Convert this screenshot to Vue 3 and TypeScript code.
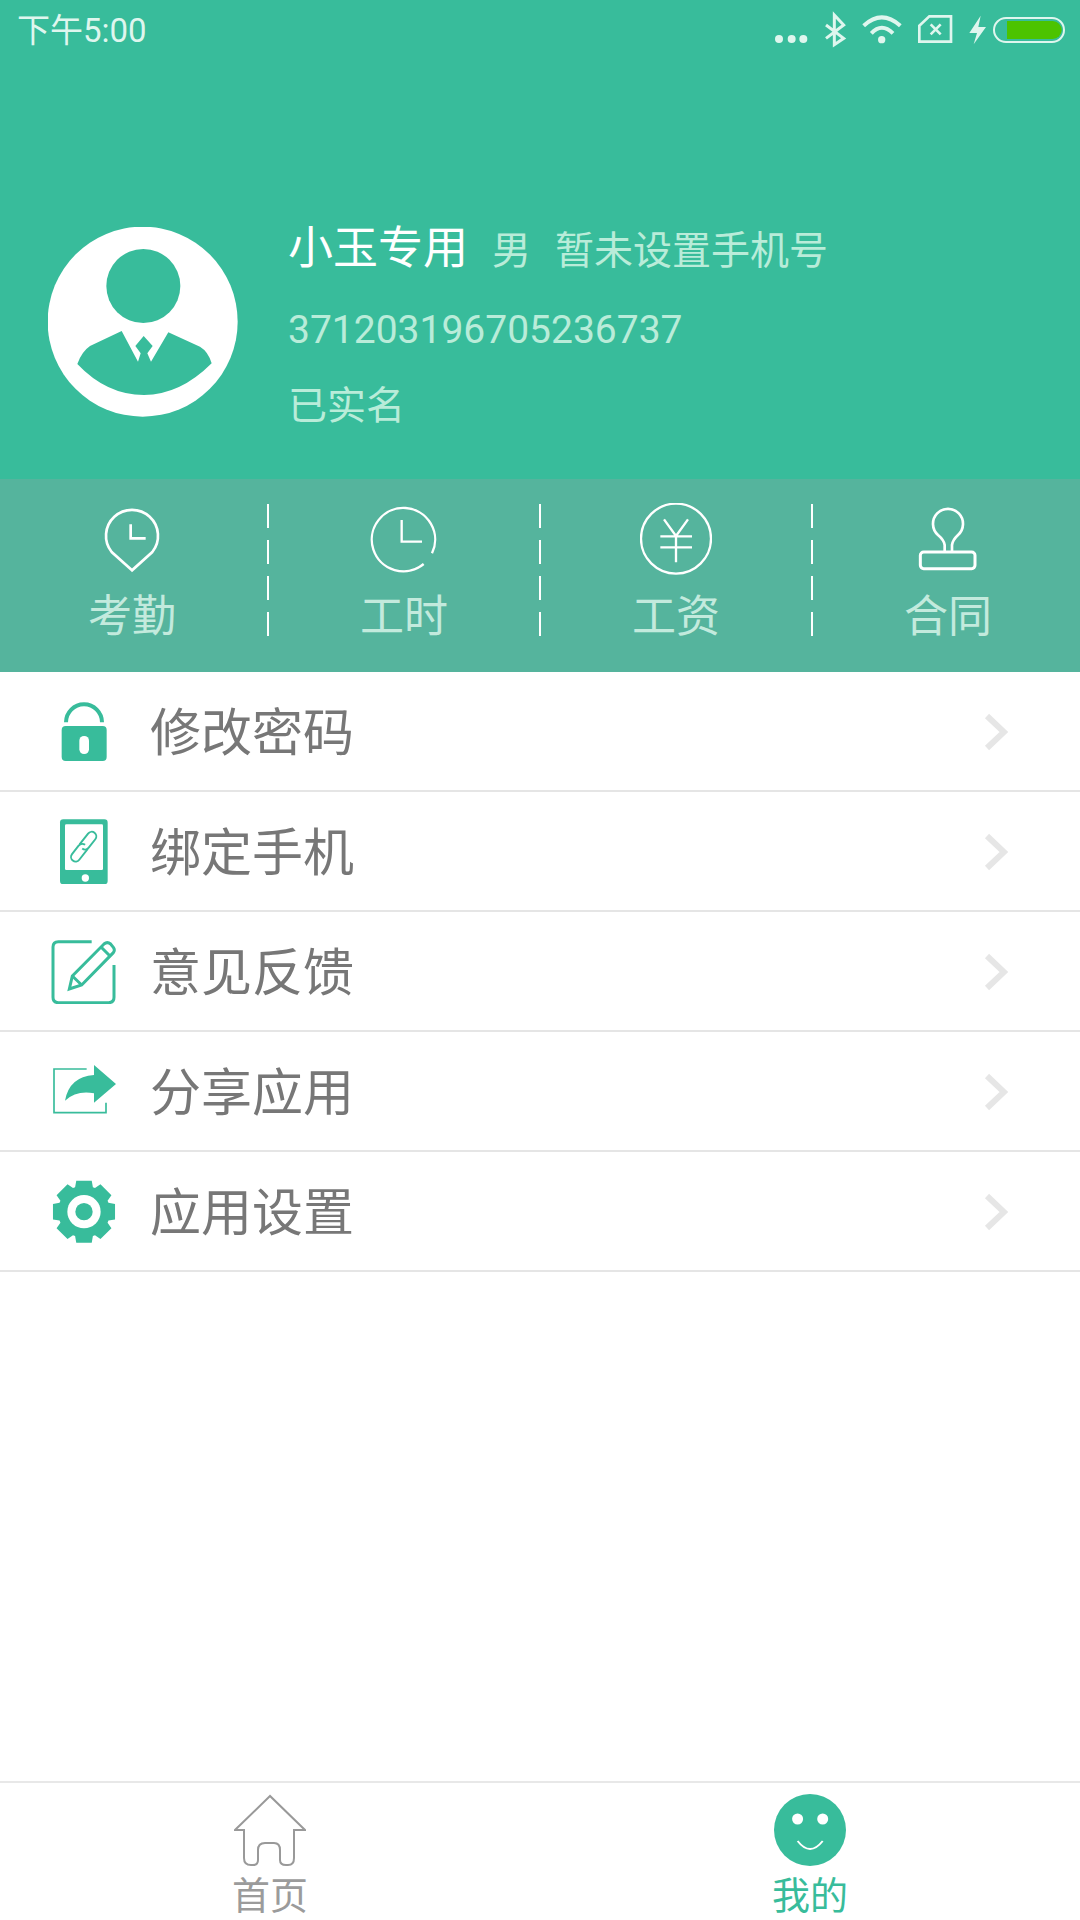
<template>
  <div class="page">
    <header class="header">
      <div class="status">
        <span class="time">下午5:00</span>
        <svg class="status-icons" viewBox="0 0 930 150">
          <g fill="#dff6ee">
            <circle cx="42" cy="102" r="12" />
            <circle cx="80" cy="102" r="12" />
            <circle cx="115" cy="102" r="12" />
            <circle cx="350" cy="104" r="11" />
            <polygon points="647,32 613,84 636,84 626,118 663,66 640,66" />
          </g>
          <g fill="none" stroke="#dff6ee">
            <path d="M183 60 L236 100 L208 119 V30 L236 60 L183 100" stroke-width="9" />
            <path d="M296 62 Q350 12 406 62" stroke-width="12" />
            <path d="M319 85 Q350 52 384 85" stroke-width="12" />
            <path d="M463 62 L493 34 H558 V110 H463 Z" stroke-width="8" />
            <path d="M497 58 L527 88 M527 58 L497 88" stroke-width="8" />
            <rect x="687" y="39" width="210" height="72" rx="36" stroke-width="6" />
          </g>
          <path d="M726 48 H863 A27 27 0 0 1 863 102 H726 Z" fill="#4cc300" />
        </svg>
      </div>
      <div class="profile">
        <svg class="avatar" viewBox="24 21 570 570">
          <circle cx="308" cy="305" r="285" fill="#fff" />
          <circle cx="310" cy="198" r="111" fill="#38bc9b" />
          <path
            d="M112 432 Q125 395 150 378 L245 333 L294 425 L302 400 L286 378 L311 348 L338 378 L322 400 L333 425 L385 337 L480 380 Q505 395 515 430 Q420 525 312 525 Q200 525 112 432 Z"
            fill="#38bc9b"
          />
        </svg>
        <div class="info">
          <div class="info-line first">
            <span class="name">小玉专用</span>
            <span class="gender">男</span>
            <span class="phone">暂未设置手机号</span>
          </div>
          <div class="info-line idcard">371203196705236737</div>
          <div class="info-line verified">已实名</div>
        </div>
      </div>
    </header>

    <div class="band">
      <div class="band-inner">
        <div v-for="cell in cells" :key="cell.key" class="cell">
          <svg v-if="cell.key === 'pin'" class="cell-icon" viewBox="49 39 216 216" fill="none" stroke="#fff">
            <path d="M157 241 L96 186 A78 78 0 1 1 218 186 Z" stroke-width="8" />
            <path d="M153 103 V145 H198" stroke-width="8" />
          </svg>
          <svg v-else-if="cell.key === 'clock'" class="cell-icon" viewBox="864 39 216 216" fill="none" stroke="#fff">
            <path d="M1056 190 A95 95 0 1 0 1031 222" stroke-width="7" />
            <path d="M965 90 V155 H1026" stroke-width="7" />
          </svg>
          <svg v-else-if="cell.key === 'yen'" class="cell-icon" viewBox="60 39 216 216" fill="none" stroke="#fff">
            <circle cx="168" cy="146" r="105" stroke-width="7" />
            <path d="M132 88 L168 138 L204 88 M168 138 V217 M121 139 H216 M121 172 H216" stroke-width="7" />
          </svg>
          <svg v-else class="cell-icon" viewBox="877 39 216 216" fill="none" stroke="#fff">
            <path d="M975 184 V165 Q973 150 955 135 A45 45 0 1 1 1015 135 Q999 150 997 165 V184" stroke-width="8" />
            <rect x="902" y="186" width="164" height="50" rx="10" stroke-width="9" />
          </svg>
          <span class="cell-label">{{ cell.label }}</span>
        </div>
      </div>
    </div>

    <ul class="menu">
      <li v-for="item in menu" :key="item.key" class="row">
        <svg v-if="item.key === 'lock'" class="row-icon" viewBox="63 54 198 198">
          <path d="M108 127 A54 54 0 0 1 216 127" fill="none" stroke="#38bc9b" stroke-width="12" />
          <rect x="95" y="138" width="135" height="105" rx="12" fill="#38bc9b" />
          <rect x="148" y="168" width="29" height="54" rx="14" fill="#fff" />
        </svg>
        <svg v-else-if="item.key === 'phone'" class="row-icon" viewBox="63 414 198 198">
          <rect x="90" y="418" width="143" height="195" rx="10" fill="#38bc9b" />
          <rect x="105" y="433" width="114" height="137" rx="4" fill="#fff" />
          <circle cx="166" cy="594" r="11" fill="#fff" />
          <g fill="none" stroke="#38bc9b" stroke-width="5" transform="translate(161 500) rotate(38) scale(1.15)">
            <path d="M-12 2 V-34 A12 12 0 0 1 12 -34 V-6 A12 12 0 0 1 0 6" />
            <path d="M-12 2 V-34 A12 12 0 0 1 12 -34 V-6 A12 12 0 0 1 0 6" transform="rotate(180)" />
          </g>
        </svg>
        <svg v-else-if="item.key === 'edit'" class="row-icon" viewBox="63 54 198 198" fill="none" stroke="#38bc9b" stroke-width="9">
          <path d="M185 65 H85 Q69 65 69 81 V232 Q69 248 85 248 H236 Q252 248 252 232 V135" />
          <path d="M118 207 L127 168 L222 72 Q232 64 242 72 L250 82 Q256 90 250 98 L155 195 Z" />
          <path d="M213 81 L240 108 M127 168 L155 195" />
        </svg>
        <svg v-else-if="item.key === 'share'" class="row-icon" viewBox="63 414 198 198">
          <path d="M170 447 H72 V578 H228 V548" fill="none" stroke="#38bc9b" stroke-width="5" />
          <path d="M192 435 L258 492 L192 548 V520 Q140 510 105 542 Q118 470 192 465 Z" fill="#38bc9b" />
        </svg>
        <svg v-else class="row-icon" viewBox="63 774 198 198">
          <polygon :points="gearPoints" fill="#38bc9b" />
          <circle cx="162" cy="875" r="50" fill="#fff" />
          <circle cx="162" cy="875" r="26" fill="#38bc9b" />
        </svg>
        <span class="row-label">{{ item.label }}</span>
        <svg class="chevron" viewBox="0 0 24 38" fill="none" stroke="#e6e6e6" stroke-width="6">
          <path d="M3 3 L20 19 L3 35" />
        </svg>
      </li>
    </ul>

    <nav class="tabs">
      <div class="tab">
        <svg class="tab-icon" viewBox="0 0 72 72" fill="none" stroke="#999" stroke-width="2">
          <path d="M36 2 L1 36 H10 V64 Q10 71 17 71 H19 Q24 71 24 66 V56 Q24 49 31 49 H40 Q46 49 46 56 V66 Q46 71 52 71 H54 Q60 71 60 64 V36 H71 Z" />
        </svg>
        <span class="tab-label">首页</span>
      </div>
      <div class="tab active">
        <svg class="tab-icon" viewBox="0 0 72 72">
          <circle cx="36" cy="36" r="36" fill="#38bc9b" />
          <circle cx="23.6" cy="25" r="5.5" fill="#fff" />
          <circle cx="48.7" cy="25" r="5.5" fill="#fff" />
          <path d="M23.6 47 Q36 63 48.7 47" fill="none" stroke="#fff" stroke-width="2" />
        </svg>
        <span class="tab-label">我的</span>
      </div>
    </nav>
  </div>
</template>

<script setup lang="ts">
const cells = [
  { key: 'pin', label: '考勤' },
  { key: 'clock', label: '工时' },
  { key: 'yen', label: '工资' },
  { key: 'stamp', label: '合同' }
];

const menu = [
  { key: 'lock', label: '修改密码' },
  { key: 'phone', label: '绑定手机' },
  { key: 'edit', label: '意见反馈' },
  { key: 'share', label: '分享应用' },
  { key: 'gear', label: '应用设置' }
];

// eight teeth round the centre of the gear, first one pointing up
const polar = (r: number, deg: number) => {
  const a = ((deg - 90) * Math.PI) / 180;
  return `${(162 + r * Math.cos(a)).toFixed(1)},${(875 + r * Math.sin(a)).toFixed(1)}`;
};
const gearPoints = Array.from({ length: 8 }, (_, i) => {
  const a = i * 45;
  return [polar(78, a - 20), polar(96, a - 14), polar(96, a + 14), polar(78, a + 20)].join(' ');
}).join(' ');
</script>

<style>
html,
body {
  margin: 0;
  background: #fff;
}
</style>

<style scoped>
.page {
  display: flex;
  flex-direction: column;
  width: 1080px;
  height: 1920px;
  overflow: hidden;
  background: #fff;
  font-family: 'Roboto', 'Noto Sans CJK SC', sans-serif;
}

.header {
  height: 479px;
  background: #38bc9b;
}

.status {
  display: flex;
  align-items: center;
  justify-content: space-between;
  height: 60px;
  padding-left: 17px;
  padding-right: 5px;
}

.time {
  margin-bottom: 5px;
  font-size: 33px;
  color: #dff6ee;
}

.status-icons {
  width: 310px;
  height: 50px;
}

.profile {
  display: flex;
  gap: 50px;
  padding: 164px 0 0 48px;
}

.avatar {
  width: 190px;
  height: 190px;
  margin-top: 3px;
}

.info {
  display: flex;
  flex-direction: column;
  color: #b9ecd9;
  font-size: 39px;
}

.info-line {
  height: 50px;
  line-height: 50px;
  white-space: nowrap;
}

.idcard {
  margin-top: 31px;
  font-size: 39px;
}

.verified {
  margin-top: 26px;
}

.name {
  font-size: 45px;
  color: #fff;
}

.gender {
  margin-left: 24px;
}

.phone {
  margin-left: 24px;
}

.band {
  height: 193px;
  overflow: hidden;
  background: #55b49d;
}

.band-inner {
  display: flex;
  width: 1088px;
  margin-left: -4px;
  padding-top: 24px;
}

.cell {
  position: relative;
  display: flex;
  flex-direction: column;
  align-items: center;
  width: 272px;
}

.cell::after {
  content: '';
  position: absolute;
  top: 1px;
  right: -1px;
  width: 2px;
  height: 133px;
  background: repeating-linear-gradient(#fff 0 24px, transparent 24px 36px);
}

.cell-icon {
  width: 72px;
  height: 72px;
}

.cell-label {
  margin-top: 17px;
  font-size: 44px;
  line-height: 50px;
  color: #c3eadd;
}

.menu {
  flex: 1;
  margin: 0;
  padding: 0;
  list-style: none;
}

.row {
  display: flex;
  align-items: center;
  box-sizing: border-box;
  height: 120px;
  padding: 0 72px 0 51px;
  border-bottom: 2px solid #e5e5e5;
}

.row-icon {
  width: 66px;
  height: 66px;
}

.row-label {
  flex: 1;
  margin-bottom: 5px;
  margin-left: 33px;
  font-size: 51px;
  color: #777;
}

.chevron {
  width: 24px;
  height: 38px;
  margin-top: 2px;
}

.tabs {
  display: flex;
  flex-shrink: 0;
  height: 137px;
  border-top: 2px solid #e8e8e8;
}

.tab {
  display: flex;
  flex: 1;
  flex-direction: column;
  align-items: center;
  padding-top: 11px;
}

.tab-icon {
  flex-shrink: 0;
  width: 72px;
  height: 72px;
}

.tab-label {
  flex-shrink: 0;
  margin-top: 5px;
  font-size: 38px;
  line-height: 50px;
  color: #9b9b9b;
}

.active .tab-label {
  color: #38bc9b;
}
</style>
